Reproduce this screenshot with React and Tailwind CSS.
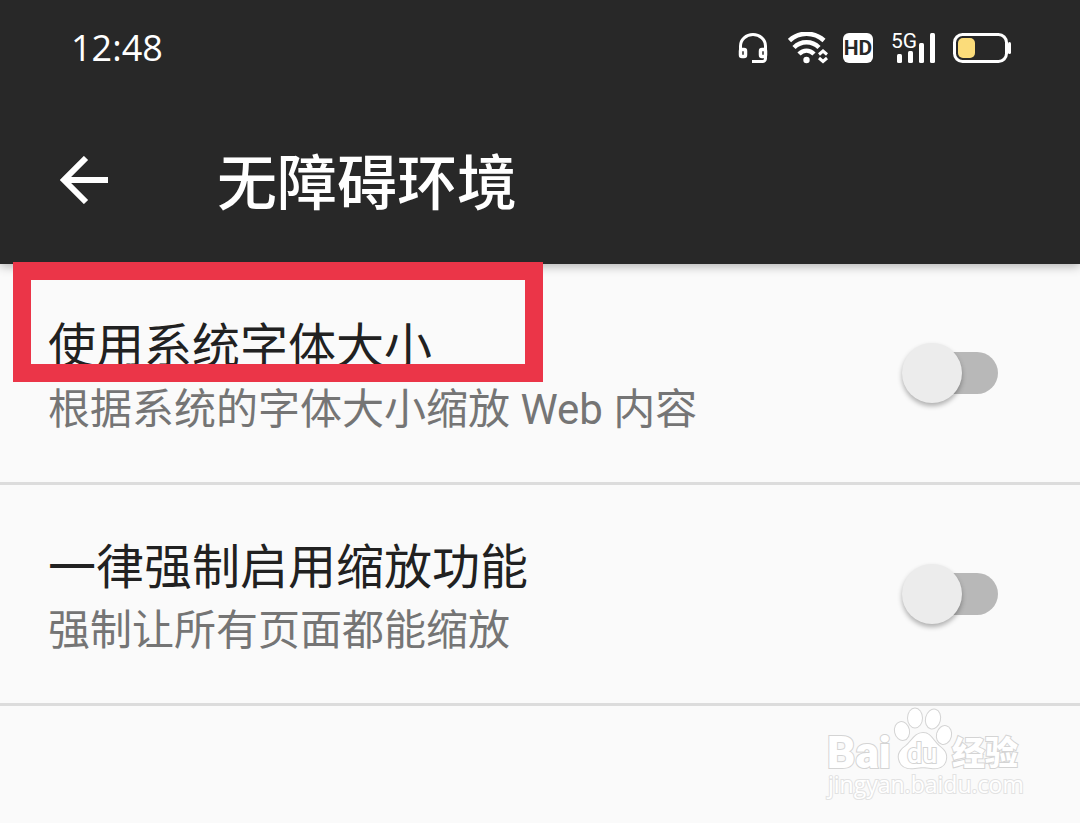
import { useState } from 'react';

const settings = [
  {
    id: 'system-font',
    title: '使用系统字体大小',
    summary: '根据系统的字体大小缩放 Web 内容',
    marked: true,
  },
  {
    id: 'force-zoom',
    title: '一律强制启用缩放功能',
    summary: '强制让所有页面都能缩放',
    marked: false,
  },
];

function HeadsetIcon() {
  return (
    <svg width="30" height="30" viewBox="0 0 30 30" fill="none" stroke="white" aria-hidden="true">
      <path d="M2.500 17V13a12.500 11.500 0 0 1 25 0v4" strokeWidth="3" />
      <rect x="2.500" y="16.500" width="5" height="7" rx="1.500" strokeWidth="3.500" />
      <rect x="22.500" y="16.500" width="5" height="7" rx="1.500" strokeWidth="3.500" />
      <path d="M27.500 22v3.500a3 3 0 0 1-3 3H14" strokeWidth="3" />
    </svg>
  );
}

function WifiIcon() {
  return (
    <svg width="40" height="32" viewBox="0 0 40 32" fill="none" stroke="white" aria-hidden="true">
      <path d="M1.500 8.500C11 -0.500 26 -0.500 36 8.500" strokeWidth="4.500" />
      <path d="M6 15.500C13 8.500 24 8.500 31 15.500" strokeWidth="4.500" />
      <path d="M11 22C15.500 17.500 21.500 17.500 26 22" strokeWidth="4.500" />
      <circle cx="18.500" cy="28" r="3.200" fill="white" stroke="none" />
      <path d="M31 22.500l4-3.500 4 3.500M31 26l4 3.500 4-3.500" strokeWidth="3" />
    </svg>
  );
}

function SignalIcon() {
  return (
    <svg width="46" height="40" viewBox="0 -4 46 40" fill="white" aria-label="5G">
      <text x="0" y="16" fontSize="21" fontFamily="'Liberation Sans Narrow', Roboto, sans-serif">5G</text>
      <rect x="6" y="22" width="5" height="9" rx="1.500" />
      <rect x="17" y="19" width="5" height="12" rx="1.500" />
      <rect x="28" y="11" width="5" height="20" rx="1.500" />
      <rect x="39" y="1" width="5" height="30" rx="1.500" />
    </svg>
  );
}

function BatteryIcon() {
  return (
    <svg width="60" height="32" viewBox="0 0 60 32" fill="none" aria-hidden="true">
      <rect x="1.500" y="2.500" width="52" height="27" rx="8" stroke="white" strokeWidth="3" />
      <rect x="5" y="6" width="17" height="20" rx="5" fill="#fbdc7a" />
      <rect x="55" y="10" width="3" height="12" rx="1.500" fill="white" />
    </svg>
  );
}

function StatusBar() {
  return (
    <div className="flex h-24 items-center justify-between pr-[67px] pl-[71px]">
      <time className="font-['Open_Sans',sans-serif] text-[36px] leading-10">12:48</time>
      <div className="flex items-center">
        <HeadsetIcon />
        <span className="ml-5">
          <WifiIcon />
        </span>
        <span className="ml-[15px] flex size-[30px] items-center justify-center rounded-md bg-white font-['Liberation_Sans_Narrow',Roboto,sans-serif] text-[21px] leading-none font-bold text-[#282828]">
          HD
        </span>
        <span className="ml-[18px]">
          <SignalIcon />
        </span>
        <span className="ml-4">
          <BatteryIcon />
        </span>
      </div>
    </div>
  );
}

function Switch({ id, checked, onChange }) {
  return (
    <input
      id={id}
      type="checkbox"
      role="switch"
      checked={checked}
      onChange={onChange}
      className="flex h-[42px] w-[84px] shrink-0 cursor-pointer appearance-none items-center rounded-full bg-[#b8b8b8] before:-ml-3 before:block before:size-[60px] before:shrink-0 before:rounded-full before:bg-[#ececec] before:shadow-[0_3px_5px_rgba(0,0,0,0.3)] before:transition checked:bg-[#8ab4f8] checked:before:translate-x-12"
    />
  );
}

function SettingRow({ item }) {
  const [on, setOn] = useState(false);

  return (
    <li className="relative flex items-center justify-between border-b-3 border-[#dcdcdc] py-[41px] pr-[82px] pl-12">
      <label htmlFor={item.id} className="flex flex-col pt-2.5">
        <span className="text-[48px] leading-[64px] text-[#212121]">{item.title}</span>
        <span className="text-[42px] leading-[62px] text-[#757575]">{item.summary}</span>
      </label>
      <Switch id={item.id} checked={on} onChange={() => setOn(!on)} />
      {item.marked && (
        <div className="pointer-events-none absolute -top-0.5 left-[13px] z-20 h-[120px] w-[530px] border-18 border-[#eb3548]" />
      )}
    </li>
  );
}

function Watermark() {
  return (
    <svg
      width="200"
      height="96"
      viewBox="0 0 200 96"
      className="pointer-events-none absolute right-[55px] bottom-[21px]"
      fill="white"
      stroke="#d4d4d4"
      strokeWidth="2"
      paintOrder="stroke"
      fontFamily="Roboto, 'Noto Sans CJK SC', sans-serif"
    >
      <text x="2" y="62" fontSize="44" fontWeight="900">Bai</text>
      <ellipse cx="77" cy="25" rx="7" ry="9" transform="rotate(-12 77 25)" />
      <ellipse cx="90" cy="12" rx="7" ry="9.500" />
      <ellipse cx="108" cy="13" rx="7" ry="9.500" transform="rotate(14 108 13)" />
      <ellipse cx="119" cy="29" rx="7" ry="9" transform="rotate(14 119 29)" />
      <path d="M98 27c-8 0-11 8-17 13-6 4-8 9-7 13 2 9 9 10 16 9 6-1 10-1 16 0 7 1 14-1 15-9 1-6-2-9-7-13-6-5-8-13-16-13z" />
      <text x="82" y="57" fontSize="27" fontWeight="500">du</text>
      <text x="127" y="59" fontSize="33" fontWeight="900">经验</text>
      <text x="3" y="87" fontSize="23" fontWeight="400" stroke="#e2e2e2" fontFamily="'Open Sans', sans-serif">
        jingyan.baidu.com
      </text>
    </svg>
  );
}

function App() {
  return (
    <div className="relative min-h-screen overflow-hidden bg-[#fafafa] font-[Roboto,'Noto_Sans_CJK_SC',sans-serif]">
      <header className="relative z-10 bg-[#282828] text-white shadow-[0_2px_10px_rgba(0,0,0,0.3)]">
        <StatusBar />
        <div className="flex h-[168px] items-center pl-[60px]">
          <button type="button" aria-label="返回" className="cursor-pointer">
            <svg width="48" height="48" viewBox="0 0 48 48" fill="none" stroke="white" strokeWidth="6">
              <path d="M48 24H5M26 2L4 24l22 22" />
            </svg>
          </button>
          <h1 className="ml-[109px] pt-2.5 text-[60px] leading-[80px] font-medium">无障碍环境</h1>
        </div>
      </header>

      <main>
        <ul>
          {settings.map((item) => (
            <SettingRow key={item.id} item={item} />
          ))}
        </ul>
      </main>

      <Watermark />
    </div>
  );
}

export default App;
